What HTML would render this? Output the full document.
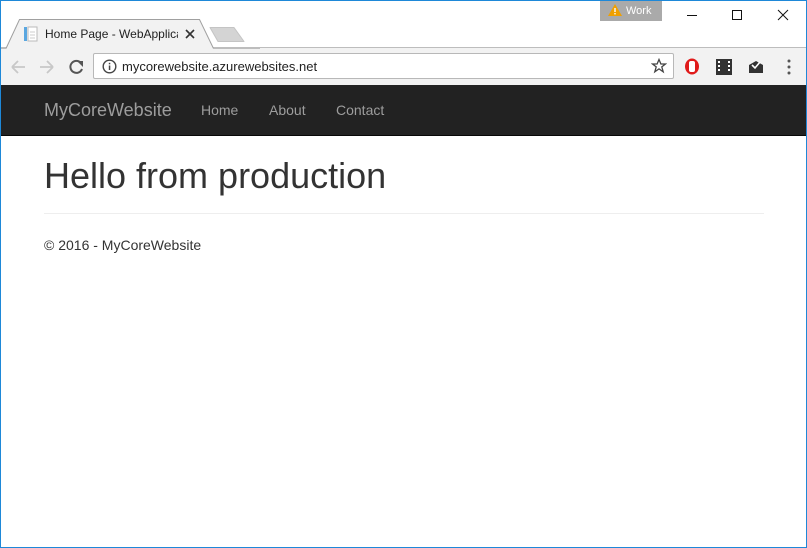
<!DOCTYPE html>
<html><head><style>
*{margin:0;padding:0;box-sizing:border-box}
body{width:807px;height:548px;overflow:hidden;font-family:"Liberation Sans",Arial,sans-serif;background:#fff;position:relative}
.frame{position:absolute;left:0;top:0;width:807px;height:548px;border:1px solid #1e88d8;pointer-events:none;z-index:10}
.toolbar{position:absolute;left:0;top:47px;width:807px;height:38px;background:#f2f2f2;border-top:1px solid #bdbdbd}
.tabtext{position:absolute;left:45px;top:27px;font-size:12px;color:#222;z-index:3;width:133px;overflow:hidden;white-space:nowrap}
.url{position:absolute;left:93px;top:53px;width:581px;height:26px;background:#fff;border:1px solid #b8b8b8;border-radius:2px}
.url span{position:absolute;left:28px;top:5px;font-size:13px;color:#222}
.nav{position:absolute;left:0;top:85px;width:807px;height:51px;background:#222;border-bottom:1px solid #080808}
.nav a{position:absolute;color:#9d9d9d;font-size:14px;top:17px}
.brand{font-size:18px!important;top:15px!important}
h1{position:absolute;left:44px;top:155px;font-size:36px;font-weight:normal;color:#333}
hr{position:absolute;left:44px;top:213px;width:720px;border:0;border-top:1px solid #eee}
.foot{position:absolute;left:44px;top:237px;font-size:14px;color:#333}
.work{position:absolute;left:600px;top:0;width:62px;height:21px;background:#aaa;color:#fff;font-size:11px;padding:5px 0 0 26px}
</style></head><body>
<div class="frame"></div>
<div class="work">Work</div>
<svg style="position:absolute;left:608px;top:4px" width="14" height="12"><path d="M7 0L14 12H0Z" fill="#f0a000"/><rect x="6.3" y="4" width="1.4" height="4" fill="#fff"/><rect x="6.3" y="9" width="1.4" height="1.4" fill="#fff"/></svg>
<svg style="position:absolute;left:680px;top:5px" width="120" height="20" stroke="#111" fill="none" stroke-width="1"><path d="M7 10.5H17"/><rect x="52.5" y="5.5" width="9" height="9"/><path d="M98 5L108 15M108 5L98 15"/></svg>
<div class="toolbar"></div>
<svg style="position:absolute;left:0;top:15px;z-index:2" width="260" height="34"><path d="M6 33.5L19.5 4.5H199.5L213.5 33.5" fill="#f2f2f2" stroke="#a0a0a0"/><rect x="0" y="33" width="6" height="1" fill="#bdbdbd"/><rect x="213" y="33" width="50" height="1" fill="#bdbdbd"/><path d="M210 12.5H234L244 26.5H218Z" fill="#d4d4d4" stroke="#c4c4c4" stroke-linejoin="round"/></svg>
<svg style="position:absolute;left:24px;top:26px;z-index:3" width="14" height="16"><rect x="0" y="1" width="3" height="14" fill="#5aa7e0"/><rect x="4" y="1" width="9" height="14" fill="#fff" stroke="#bbb"/><path d="M6 6h5M6 9h5M6 12h5" stroke="#ccc"/></svg>
<div class="tabtext">Home Page - WebApplica</div>
<svg style="position:absolute;left:185px;top:29px;z-index:3" width="10" height="10" stroke="#333" stroke-width="1.6"><path d="M1 1L9 9M9 1L1 9"/></svg>
<svg style="position:absolute;left:8px;top:58px" width="80" height="18" fill="none" stroke-width="1.8"><path d="M4 9H17M4 9L10 3M4 9L10 15" stroke="#c8c8c8"/><path d="M45 9H32M45 9L39 3M45 9L39 15" stroke="#c8c8c8"/><path d="M73 5A6 6 0 1 0 74 11" stroke="#555" stroke-width="2"/><path d="M69 3H75V9Z" fill="#555" stroke="none"/></svg>
<div class="url"><svg style="position:absolute;left:8px;top:5px" width="15" height="15"><circle cx="7.5" cy="7.5" r="6.3" fill="none" stroke="#444" stroke-width="1.4"/><rect x="6.8" y="6.5" width="1.5" height="4.5" fill="#444"/><rect x="6.8" y="3.8" width="1.5" height="1.5" fill="#444"/></svg><span>mycorewebsite.azurewebsites.net</span>
<svg style="position:absolute;left:557px;top:4px" width="16" height="16"><path d="M8 1.5L9.9 6H14.5L10.8 8.9L12.2 13.8L8 10.9L3.8 13.8L5.2 8.9L1.5 6H6.1Z" fill="none" stroke="#444" stroke-width="1.3"/></svg></div>
<svg style="position:absolute;left:683px;top:57px" width="120" height="20"><ellipse cx="9" cy="9.5" rx="7" ry="8" fill="#e01b1b"/><rect x="6" y="4" width="6" height="11" rx="2" fill="#fff"/><rect x="33" y="2" width="16" height="16" fill="#333"/><path d="M35 4h2v2h-2zM35 8h2v2h-2zM35 12h2v2h-2zM45 4h2v2h-2zM45 8h2v2h-2zM45 12h2v2h-2z" fill="#fff"/><path d="M66 8L73 4L80 8V16H66Z" fill="#333"/><path d="M69 8L72 11L77 5" stroke="#fff" stroke-width="1.6" fill="none"/><circle cx="106" cy="4" r="1.5" fill="#555"/><circle cx="106" cy="10" r="1.5" fill="#555"/><circle cx="106" cy="16" r="1.5" fill="#555"/></svg>
<div class="nav"><a class="brand" style="left:44px">MyCoreWebsite</a><a style="left:201px">Home</a><a style="left:269px">About</a><a style="left:336px">Contact</a></div>
<h1>Hello from production</h1>
<hr>
<div class="foot">© 2016 - MyCoreWebsite</div>
</body></html>
